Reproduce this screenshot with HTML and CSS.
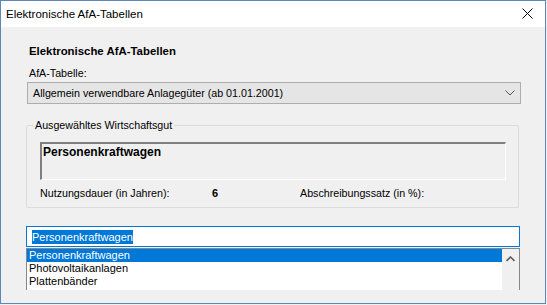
FILE: index.html
```html
<!DOCTYPE html>
<html lang="de">
<head>
    <meta charset="UTF-8">
    <title>Elektronische AfA-Tabellen</title>
    <link rel="stylesheet" href="styles.css">
</head>
<body>
    <div class="window">
        <div class="titlebar">
            <span class="title">Elektronische AfA-Tabellen</span>
            <svg class="close" width="11" height="11" viewBox="0 0 11 11">
                <path d="M0.5 0.5 L10.5 10.5 M10.5 0.5 L0.5 10.5" stroke="#000" stroke-width="1" fill="none"/>
            </svg>
        </div>
        <div class="client">
            <h2 class="heading">Elektronische AfA-Tabellen</h2>
            <label class="label">AfA-Tabelle:</label>
            <div class="combo">
                <span>Allgemein verwendbare Anlagegüter (ab 01.01.2001)</span>
                <svg width="10" height="6" viewBox="0 0 10 6">
                    <path d="M0.5 0.5 L5 5 L9.5 0.5" stroke="#555" stroke-width="1" fill="none"/>
                </svg>
            </div>

            <fieldset class="group">
                <legend>Ausgewähltes Wirtschaftsgut</legend>
                <div class="sunken">Personenkraftwagen</div>
                <div class="facts">
                    <span class="fact-label">Nutzungsdauer (in Jahren):</span>
                    <span class="fact-value">6</span>
                    <span>Abschreibungssatz (in %):</span>
                </div>
            </fieldset>

            <div class="search"><span class="sel">Personenkraftwagen</span></div>
            <div class="listbox">
                <ul class="items">
                    <li class="active">Personenkraftwagen</li>
                    <li>Photovoltaikanlagen</li>
                    <li>Plattenbänder</li>
                </ul>
                <div class="scroll">
                    <svg width="9" height="6" viewBox="0 0 9 6">
                        <path d="M0.5 5 L4.5 1 L8.5 5" stroke="#606060" stroke-width="1.6" fill="none"/>
                    </svg>
                </div>
            </div>
        </div>
    </div>
</body>
</html>
```

FILE: styles.css
```css
body {
    margin: 0;
    background-color: #f0f0f0;
    font-family: "Liberation Sans", Arial, sans-serif;
    font-size: 10.7px;
    color: #000;
}
.window {
    width: 544px;
    height: 302px;
    border: 1px solid #5b87b9;
    background-color: #f0f0f0;
    display: flex;
    flex-direction: column;
    overflow: hidden;
}
.titlebar {
    height: 26px;
    background-color: #fff;
    display: flex;
    align-items: center;
    justify-content: space-between;
    padding: 0 12px 0 5px;
    flex-shrink: 0;
}
.title {
    font-size: 11.5px;
    padding-bottom: 1px;
}
.close {
    margin-top: -2px;
}
.client {
    padding: 18px 24px 0 25px;
    display: flex;
    flex-direction: column;
}
.heading {
    font-size: 11.4px;
    font-weight: bold;
    margin: 0 0 0 3px;
    line-height: 13px;
}
.label {
    margin: 8px 0 0 3px;
    line-height: 14px;
}
.combo {
    margin: 2px 0 0 1px;
    height: 20px;
    border: 1px solid #adadad;
    background-color: #e5e5e5;
    display: flex;
    align-items: center;
    justify-content: space-between;
    padding: 0 5px 0 5px;
}
.group {
    margin: 14px 2px 0 0;
    border: 1px solid #dcdcdc;
    border-radius: 2px;
    padding: 8px 12px 10px 13px;
    height: 70px;
}
.group legend {
    padding: 0 2px;
    margin-left: -7px;
    line-height: 14px;
}
.sunken {
    height: 33px;
    border-top: 2px solid #808080;
    border-left: 2px solid #808080;
    border-right: 1px solid #ffffff;
    border-bottom: 1px solid #ffffff;
    font-weight: bold;
    font-size: 12px;
    line-height: 14px;
    padding: 1px 1px;
    margin-top: 2px;
}
.facts {
    display: flex;
    margin-top: 6px;
    line-height: 14px;
}
.fact-label {
    width: 172px;
}
.fact-value {
    width: 88px;
    font-weight: bold;
    font-size: 11px;
}
.search {
    margin: 18px 1px 0 0;
    height: 19px;
    border: 1px solid #0078d7;
    background-color: #fff;
    display: flex;
    align-items: center;
    padding-left: 5px;
    font-size: 11px;
}
.sel {
    background-color: #0078d7;
    color: #fff;
    line-height: 14px;
}
.listbox {
    margin: 1px 1px 0 0;
    height: 41px;
    border-left: 1px solid #828790;
    border-top: 1px solid #828790;
    border-right: 1px solid #828790;
    background-color: #fff;
    display: flex;
    font-size: 11px;
}
.items {
    list-style: none;
    margin: 0;
    padding: 0;
    flex: 1;
}
.items li {
    height: 13px;
    line-height: 13px;
    padding-left: 2px;
}
.items li.active {
    background-color: #0078d7;
    color: #fff;
}
.scroll {
    width: 17px;
    background-color: #f0f0f0;
    display: flex;
    justify-content: center;
    padding-top: 7px;
    box-sizing: border-box;
}
```
